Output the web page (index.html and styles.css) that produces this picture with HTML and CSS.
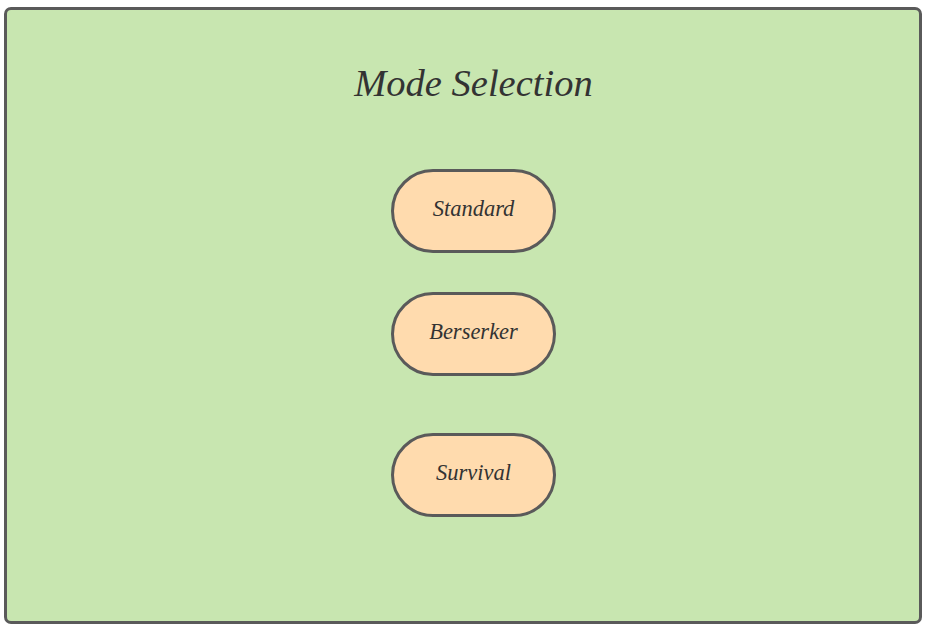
FILE: index.html
```html
<!DOCTYPE html>
<html lang="en">
<head>
    <meta charset="UTF-8">
    <title>Mode Selection</title>
    <link rel="stylesheet" href="styles.css">
</head>
<body>
    <div class="frame">
        <h1 class="title">Mode Selection</h1>
        <div class="modes">
            <button class="mode mode-standard">Standard</button>
            <button class="mode mode-berserker">Berserker</button>
            <button class="mode mode-survival">Survival</button>
        </div>
    </div>
</body>
</html>
```

FILE: styles.css
```css
:root {
    --frame-bg: #c8e6b0;
    --frame-border: #5a5a5a;
    --mode-bg: #ffdbae;
    --text-color: #333333;
}

body {
    margin: 0;
    font-family: "Liberation Serif", serif;
    color: var(--text-color);
}

.frame {
    box-sizing: border-box;
    width: 918px;
    height: 617px;
    margin: 7px 0 0 4px;
    padding: 0 0 0 21px;
    background: var(--frame-bg);
    border: 3px solid var(--frame-border);
    border-radius: 7px;
    display: flex;
    flex-direction: column;
    align-items: center;
}

.title {
    font-size: 38.5px;
    font-style: italic;
    font-weight: normal;
    margin: 51px 0 0 0;
    line-height: 44px;
}

.modes {
    display: flex;
    flex-direction: column;
    align-items: center;
    margin-top: 64px;
}

.mode {
    box-sizing: border-box;
    width: 165px;
    height: 84px;
    background: var(--mode-bg);
    border: 3px solid var(--frame-border);
    border-radius: 42px;
    font-family: "Liberation Serif", serif;
    font-style: italic;
    font-size: 22.5px;
    color: var(--text-color);
    padding: 0 0 4px 0;
}

.mode-berserker {
    margin-top: 39px;
}

.mode-survival {
    margin-top: 57px;
}
```
